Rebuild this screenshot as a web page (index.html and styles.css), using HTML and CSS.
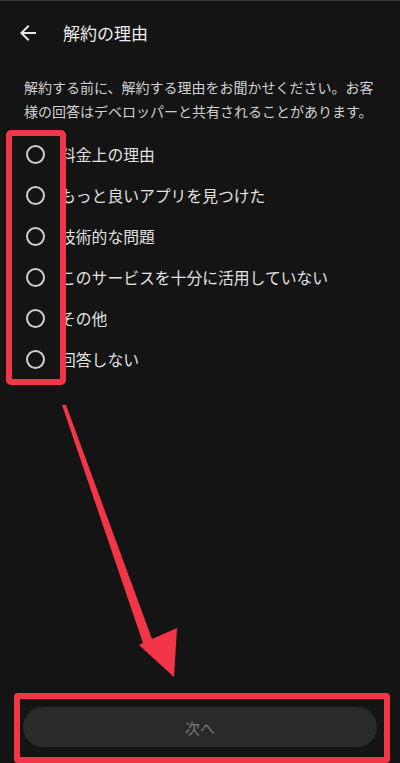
FILE: index.html
```html
<!DOCTYPE html>
<html lang="ja">
<head>
    <meta charset="utf-8">
    <title>解約の理由</title>
    <link rel="stylesheet" href="styles.css">
</head>
<body>
    <section class="page">
        <header class="topbar">
            <span class="back">
                <svg width="24" height="24" viewBox="0 0 24 24"><path fill="#e6e6e6" d="M20 11H7.83l5.59-5.59L12 4l-8 8 8 8 1.41-1.41L7.83 13H20v-2z"/></svg>
            </span>
            <h1 class="title">解約の理由</h1>
        </header>

        <p class="intro">解約する前に、解約する理由をお聞かせください。お客様の回答はデベロッパーと共有されることがあります。</p>

        <section class="options">
            <label class="option"><span class="radio"></span>料金上の理由</label>
            <label class="option"><span class="radio"></span>もっと良いアプリを見つけた</label>
            <label class="option"><span class="radio"></span>技術的な問題</label>
            <label class="option"><span class="radio"></span>このサービスを十分に活用していない</label>
            <label class="option"><span class="radio"></span>その他</label>
            <label class="option"><span class="radio"></span>回答しない</label>
            <span class="mark mark-options"></span>
        </section>

        <footer class="footer">
            <button class="next">次へ</button>
            <span class="mark mark-footer"></span>
        </footer>
    </section>

    <!-- annotation arrow -->
    <svg class="pointer" width="400" height="763" viewBox="0 0 400 763">
        <polygon fill="#f23648" points="62,405 66,405 152,639 177,628 174,677 139,645 143,643"/>
    </svg>
</body>
</html>
```

FILE: styles.css
```css
body {
    margin: 0;
    background-color: #141414;
    font-family: "Noto Sans CJK JP", "Noto Sans", sans-serif;
    color: #e2e2e2;
}
.page {
    display: flex;
    flex-direction: column;
    min-height: 100vh;
    box-sizing: border-box;
    border-top: 1px solid #3c3c3c;
}
.topbar {
    display: flex;
    align-items: center;
    height: 63px;
    padding-left: 16px;
}
.back {
    display: flex;
    width: 24px;
    height: 24px;
}
.title {
    margin: 0 0 0 23px;
    font-size: 17px;
    font-weight: 400;
    color: #ececec;
}
.intro {
    margin: 11px 24px 0 24px;
    font-size: 14px;
    line-height: 24px;
    color: #d0d0d0;
}
.options {
    position: relative;
    display: flex;
    flex-direction: column;
    margin-top: 11px;
}
.option {
    display: flex;
    align-items: center;
    height: 41px;
    padding-left: 26px;
    font-size: 15.8px;
    color: #e2e2e2;
}
.radio {
    width: 15px;
    height: 15px;
    border: 2px solid #cfcfcf;
    border-radius: 50%;
    margin-right: 15px;
}
.mark {
    position: absolute;
    border: 6px solid #f23648;
    border-radius: 5px;
}
.mark-options {
    top: -4px;
    left: 6px;
    width: 48px;
    height: 243px;
}
.footer {
    position: relative;
    margin-top: auto;
    padding: 15px 23px 16px 23px;
}
.next {
    display: block;
    width: 100%;
    height: 40px;
    border: none;
    border-radius: 20px;
    background-color: #2a2a2a;
    color: #7a7a7a;
    font-family: inherit;
    font-size: 15px;
}
.mark-footer {
    top: 1px;
    left: 14px;
    right: 10px;
    bottom: 0;
    border-radius: 4px;
}
.pointer {
    position: absolute;
    top: 0;
    left: 0;
}
```
